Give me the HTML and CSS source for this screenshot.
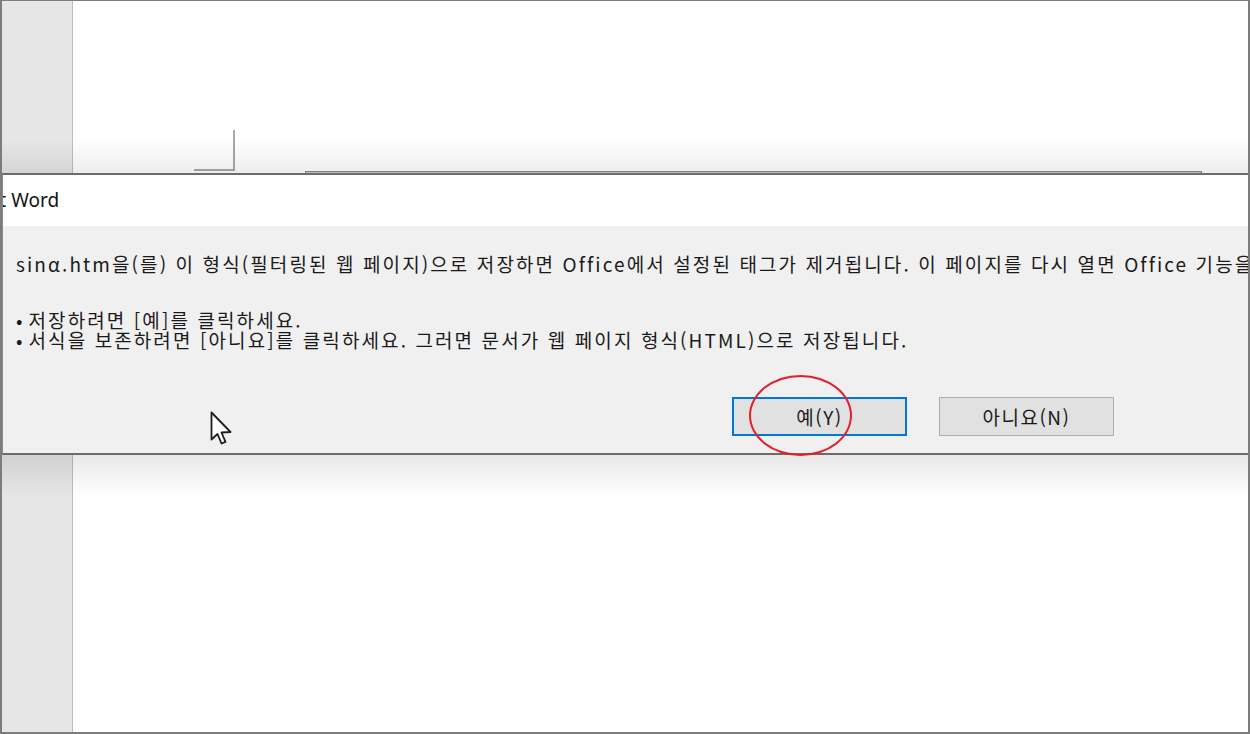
FILE: index.html
```html
<!DOCTYPE html>
<html lang="ko">
<head>
    <meta charset="UTF-8">
    <meta name="viewport" content="width=device-width, initial-scale=1.0">
    <title>Microsoft Word</title>
    <link rel="stylesheet" href="styles.css">
</head>
<body>
    <div class="screen">
        <div class="doc doc-top">
            <div class="gutter"></div>
            <div class="page">
                <div class="corner"></div>
                <div class="table-edge"></div>
            </div>
        </div>

        <div class="dialog">
            <div class="dialog-title"><span>Microsoft Word</span></div>
            <div class="dialog-body">
                <p class="msg">sinα.htm을(를) 이 형식(필터링된 웹 페이지)으로 저장하면 Office에서 설정된 태그가 제거됩니다. 이 페이지를 다시 열면 Office 기능을 사용할 수 없습니다.</p>
                <ul class="choices">
                    <li>저장하려면 [예]를 클릭하세요.</li>
                    <li>서식을 보존하려면 [아니요]를 클릭하세요. 그러면 문서가 웹 페이지 형식(HTML)으로 저장됩니다.</li>
                </ul>
                <div class="buttons">
                    <button class="btn btn-yes">예(Y)</button>
                    <button class="btn">아니요(N)</button>
                </div>
            </div>
        </div>

        <div class="doc doc-bottom">
            <div class="gutter"></div>
            <div class="page"></div>
        </div>

        <!-- 강조 표시와 마우스 포인터 -->
        <div class="mark"></div>
        <svg class="pointer" width="24" height="36" viewBox="0 0 24 36">
            <path d="M1.5 1.5 L1.5 28.5 L7.5 23 L11.5 32.5 L15.5 30.8 L11.5 21.5 L20.5 21 Z" fill="#fff" stroke="#1e1e1e" stroke-width="1.8" stroke-linejoin="round"/>
        </svg>
    </div>
</body>
</html>
```

FILE: styles.css
```css
*{
    box-sizing: border-box;
}
body{
    margin: 0;
    background: #fff;
}
.screen{
    position: relative;
    width: 1250px;
    height: 734px;
    display: flex;
    flex-direction: column;
    border: 2px solid #7c7c7c;
    border-top-width: 1px;
    overflow: hidden;
    font-family: "Noto Sans", "Noto Sans CJK KR", sans-serif;
    color: #1a1a1a;
}

/* 문서 영역 */
.doc{
    display: flex;
}
.doc-top{
    height: 172px;
    position: relative;
}
.doc-top::after{
    content: "";
    position: absolute;
    left: 0;
    right: 0;
    bottom: 0;
    height: 34px;
    background: linear-gradient(rgba(0,0,0,0), rgba(0,0,0,0.07));
}
.doc-bottom{
    flex: 1;
    position: relative;
}
.doc-bottom::after{
    content: "";
    position: absolute;
    left: 0;
    right: 0;
    top: 0;
    height: 42px;
    background: linear-gradient(rgba(0,0,0,0.09), rgba(0,0,0,0));
}
.gutter{
    width: 71px;
    background: #e6e6e6;
    border-right: 1px solid #bdbdbd;
}
.page{
    flex: 1;
    background: #fff;
    position: relative;
}
.corner{
    width: 41px;
    height: 41px;
    margin: 129px 0 0 121px;
    border-right: 2px solid #a8a8a8;
    border-bottom: 2px solid #a8a8a8;
}
.table-edge{
    height: 3px;
    margin: 0 46px 0 232px;
    border: 1px solid #8a8a8a;
    background: #c8c8c8;
}

/* 대화 상자 */
.dialog{
    height: 282px;
    display: flex;
    flex-direction: column;
    border-top: 2px solid #6c6c6c;
    border-bottom: 2px solid #6c6c6c;
    border-left: 1px solid #8a8a8a;
    position: relative;
    z-index: 1;
}
.dialog-title{
    height: 51px;
    background: #fff;
    font-size: 19px;
    line-height: 51px;
    color: #111;
    white-space: nowrap;
    overflow: hidden;
}
.dialog-title span{
    margin-left: -81px;
}
.dialog-body{
    flex: 1;
    background: #f0f0f0;
    padding: 28px 0 16px 13px;
    font-family: "Noto Sans CJK KR", sans-serif;
    font-size: 19px;
    letter-spacing: 2.1px;
    white-space: nowrap;
    overflow: hidden;
}
.msg{
    margin: 0;
    line-height: 20px;
}
.choices{
    list-style: none;
    margin: 36px 0 0;
    padding: 0;
    line-height: 20px;
}
.choices li::before{
    content: "•";
    margin-right: 6px;
    letter-spacing: 0;
}
.buttons{
    display: flex;
    gap: 32px;
    justify-content: flex-end;
    margin: 47px 134px 0 0;
}
.btn{
    width: 175px;
    height: 39px;
    background: #e1e1e1;
    border: 1px solid #adadad;
    font-family: "Noto Sans CJK KR", sans-serif;
    font-size: 19px;
    letter-spacing: 1.5px;
    color: #1a1a1a;
    padding: 0;
}
.btn-yes{
    border: 2px solid #0078d7;
}

/* 위에 그린 것 */
.mark{
    position: absolute;
    left: 747px;
    top: 374px;
    width: 103px;
    height: 81px;
    border: 2px solid #e0202a;
    border-radius: 50%;
    z-index: 2;
}
.pointer{
    position: absolute;
    left: 208px;
    top: 410px;
    z-index: 2;
}
```
